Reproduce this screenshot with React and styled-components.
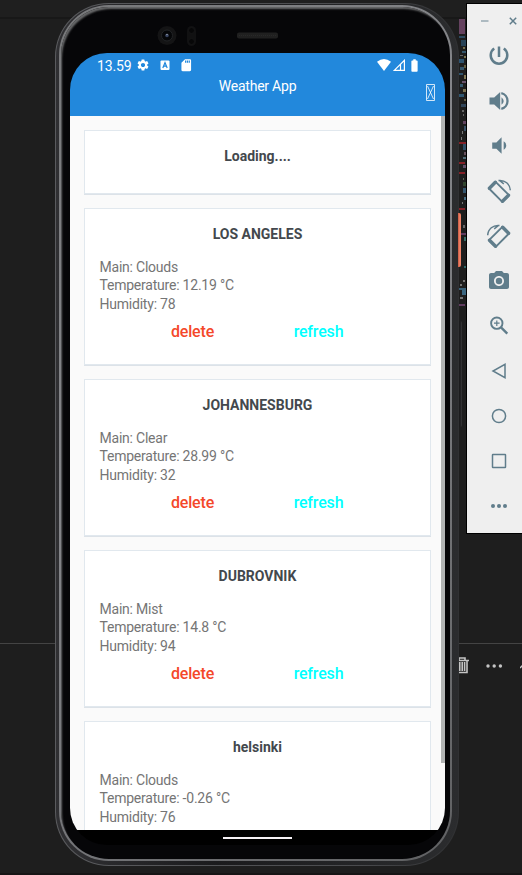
import React from "react";
import styled, { createGlobalStyle, css } from "styled-components";
import { MdVolumeDown, MdCameraAlt, MdSettings, MdSdCard, MdBatteryFull } from "react-icons/md";

const Global = createGlobalStyle`
  *, *::before, *::after { box-sizing: border-box; }
  body { margin: 0; background: #1f1f1f; font-family: Roboto, sans-serif; }
`;

const Desktop = styled.main`
  position: relative;
  width: 522px;
  height: 875px;
  overflow: hidden;
  background: #1e1e1e;
`;

/* Editor behind the emulator */
const Editor = styled.div`
  display: flex;
  flex-direction: column;
  height: 100%;
  border-bottom: 2px solid #171515;
`;
const EditorTabs = styled.div`
  height: 19px;
  background: #1f1f1f;
  border-bottom: 2px solid #181818;
`;
const EditorBody = styled.div`
  height: 624px;
  padding-left: 459px;
`;
const EditorPanel = styled.div`
  display: flex;
  align-items: flex-start;
  flex: 1;
  padding: 12px 0 0 454px;
  border-top: 1px solid #444;
  color: #c5c5c5;
`;
const PanelIcon = styled.svg`
  flex: none;
  margin-right: ${(p) => p.$after || 0}px;
`;

/* Phone */
const Phone = styled.section`
  position: absolute;
  left: 55px;
  top: 3px;
  width: 404px;
  height: 863px;
  padding: 1px;
  border-radius: 54px;
  background: linear-gradient(90deg, #5a5b5e, #4a4b4e 75%, #303133 98%);
`;
const Rim = styled.div`
  height: 100%;
  padding: 1px 6px 4px 3px;
  border-radius: 53px;
  background: linear-gradient(90deg, #303033, #1b1b1d 40%, #2b2c2e);
`;
const Chrome = styled.div`
  height: 100%;
  padding: 2px;
  border-radius: 50px;
  background: linear-gradient(135deg, #77787a, #85868a 40%, #606163);
`;
const Bezel = styled.div`
  display: flex;
  flex-direction: column;
  height: 100%;
  padding: 0 5px 0 9px;
  border-radius: 48px;
  background: #060608;
  box-shadow: inset 2px 3px 2px -1px #68696a;
`;
const Sensors = styled.div`
  height: 46px;
  flex: none;
`;
const SideKey = styled.div`
  position: absolute;
  left: 458px;
  top: ${(p) => p.$top}px;
  width: ${(p) => (p.$accent ? 3 : 4)}px;
  height: ${(p) => p.$height}px;
  border-radius: 0 2px 2px 0;
  background: ${(p) => (p.$accent ? "linear-gradient(90deg,#c65942,#f08367 60%)" : "linear-gradient(90deg,#151516,#202022 60%,#39393b)")};
`;
const Screen = styled.div`
  display: flex;
  flex-direction: column;
  flex: none;
  width: 375px;
  height: 792px;
  overflow: hidden;
  border-radius: 37px;
  background: #000;
`;
const AppBar = styled.header`
  display: flex;
  flex-direction: column;
  flex: none;
  height: 63px;
  background: #2288dc;
  color: #fff;
`;
const StatusBar = styled.div`
  display: flex;
  align-items: center;
  height: 24px;
  padding: 0 23px 0 27px;
`;
const Clock = styled.span`
  width: 39px;
  padding-top: 1px;
  font-size: 14px;
  line-height: 24px;
  letter-spacing: -0.15px;
`;
const StatusIcons = styled.div`
  display: flex;
  align-items: center;
  gap: ${(p) => p.$gap}px;
  ${(p) => p.$end && css`margin-left: auto;`}
`;
const TitleRow = styled.div`
  display: grid;
  grid-template-columns: 30px 1fr 30px;
  height: 39px;
`;
const AppTitle = styled.h1`
  grid-column: 2;
  margin: 0;
  font-size: 14px;
  font-weight: 400;
  line-height: 18px;
  letter-spacing: -0.22px;
  text-align: center;
`;
const MissingGlyph = styled.svg`
  margin: 7px 0 0 11px;
`;
const Viewport = styled.div`
  display: flex;
  flex: none;
  height: 714px;
  overflow: hidden;
  background: #fafafa;
`;
const CardList = styled.div`
  display: flex;
  flex-direction: column;
  gap: 14px;
  width: 371px;
  padding: 14px 10px 0 14px;
`;
const ScrollThumb = styled.div`
  width: 4px;
  height: 647px;
  background: #b2b4b4;
`;
const Card = styled.article`
  flex: none;
  height: ${(p) => (p.$short ? 64 : 157)}px;
  padding: 17px 14.5px 0;
  border: 1px solid #e1e8ee;
  background: #fff;
  box-shadow: 0 1px 0 #dce2e8;
`;
const CardTitle = styled.h2`
  margin: 0 0 15px;
  color: #43484d;
  font-size: 14px;
  font-weight: 700;
  line-height: 17px;
  text-align: center;
`;
const Detail = styled.p`
  margin: 0;
  color: #757575;
  font-size: 14px;
  line-height: 18.4px;
  letter-spacing: -0.22px;
`;
const Actions = styled.div`
  display: grid;
  grid-template-columns: 1fr 1fr;
  padding: 0 34px 0 30px;
  margin-top: 8px;
`;
const Action = styled.button`
  padding: 0;
  border: 0;
  background: none;
  color: ${(p) => p.$color};
  font: 500 16px/21px Roboto, sans-serif;
  letter-spacing: -0.17px;
`;
const NavBar = styled.footer`
  display: flex;
  justify-content: center;
  height: 15px;
  padding-top: 7px;
`;
const HomeHandle = styled.div`
  width: 69px;
  height: 2px;
  background: #f6f2f6;
`;

/* Emulator controls */
const Controls = styled.aside`
  position: absolute;
  left: 466px;
  top: 3px;
  display: flex;
  flex-direction: column;
  width: 66px;
  height: 531px;
  border: 1px solid #000;
  background: #efefef;
  color: #607d8b;
`;
const WindowButtons = styled.div`
  display: flex;
  align-items: center;
  justify-content: space-between;
  height: 29px;
  padding: 5px 14px 0 14px;
`;
const Control = styled.button`
  display: grid;
  place-items: center;
  width: 64px;
  height: 45px;
  padding: 0;
  border: 0;
  background: none;
  color: inherit;
`;

const Rotate = ({ flip }) => (
  <svg width="26" height="26" viewBox="0 0 26 26" fill="none" stroke="currentColor">
    <g transform={flip ? "translate(26 0) scale(-1 1)" : undefined}>
      <path d="M9.6 3.8 23 17.2 16.3 23.8 3 10.5z" strokeWidth="1.9" strokeLinejoin="round" />
      <path d="M3.4 10.2 9.3 4.3M16.5 23.2 22.5 17.2" strokeWidth="3.4" strokeLinecap="round" />
      <path d="M12.5 2.5C19 1.8 24 6 24.3 12.3M13.5 2.5l4.3 3.3" strokeWidth="1.5" />
    </g>
  </svg>
);
const Outline = ({ children }) => (
  <svg width="20" height="20" viewBox="0 0 20 20" fill="none" stroke="currentColor" strokeWidth="1.5">{children}</svg>
);
const Power = () => (
  <svg width="24" height="24" viewBox="0 0 24 24" fill="none" stroke="currentColor" strokeWidth="2.5"><path d="M12 2.5v10.5M7.2 4.6a8.3 8.3 0 1 0 9.6 0" /></svg>
);
const VolumeUp = () => (
  <svg width="24" height="24" viewBox="0 0 24 24" fill="none" stroke="currentColor"><path d="M2.5 8.5v7h4.7l6 5.5V3l-6 5.5z" fill="currentColor" stroke="none" /><path d="M14.5 8.2q4.4 3.8 0 7.6z" fill="currentColor" stroke="none" /><path d="M14.3 4.2a8 8 0 0 1 0 15.6" strokeWidth="2.3" /></svg>
);
const ZoomIn = () => (
  <svg width="24" height="24" viewBox="0 0 24 24" fill="none" stroke="currentColor"><circle cx="9.8" cy="9.2" r="5.7" strokeWidth="1.9" /><path d="m14 13.4 6.3 6.2" strokeWidth="2.4" /><path d="M7 9.2h5.6M9.8 6.4V12" strokeWidth="1.2" /></svg>
);

const controls = [
  ["Power", <Power />],
  ["Volume up", <VolumeUp />],
  ["Volume down", <MdVolumeDown size={25} />],
  ["Rotate left", <Rotate />],
  ["Rotate right", <Rotate flip />],
  ["Screenshot", <MdCameraAlt size={24} />],
  ["Zoom", <ZoomIn />],
  ["Back", <Outline><path d="M16 3.3v13.4L4 10z" /></Outline>],
  ["Home", <Outline><circle cx="10" cy="10" r="6.6" /></Outline>],
  ["Overview", <Outline><rect x="3.5" y="3.5" width="13" height="13" rx=".5" /></Outline>],
  ["More", <Outline><g fill="currentColor" stroke="none"><circle cx="4" cy="10" r="2" /><circle cx="10" cy="10" r="2" /><circle cx="16" cy="10" r="2" /></g></Outline>],
];

const cities = [
  { name: "LOS ANGELES", main: "Clouds", temp: "12.19", humidity: 78, actions: true },
  { name: "JOHANNESBURG", main: "Clear", temp: "28.99", humidity: 32, actions: true },
  { name: "DUBROVNIK", main: "Mist", temp: "14.8", humidity: 94, actions: true },
  { name: "helsinki", main: "Clouds", temp: "-0.26", humidity: 76, actions: false },
];

const codeMarks = [
  [0, 36, 6, 2, "#2c4a60"], [2, 40, 5, 6, "#284357"], [4, 47, 2, 2, "#77704e"], [3, 51, 4, 2, "#34566b"],
  [1, 55, 3, 1, "#666"], [5, 56, 2, 2, "#7b7650"], [0, 59, 5, 4, "#2e536f"], [5, 65, 2, 3, "#615d40"],
  [1, 67, 4, 3, "#34556c"], [5, 75, 2, 4, "#817855"], [0, 73, 4, 2, "#31556d"], [3, 81, 4, 2, "#69536c"],
  [1, 84, 3, 3, "#365a70"], [4, 89, 3, 3, "#7b7352"], [0, 94, 5, 3, "#305670"], [5, 99, 2, 2, "#666045"],
  [2, 104, 5, 3, "#32465a"], [3, 110, 2, 2, "#666"], [4, 114, 1, 2, "#666"], [4, 121, 3, 3, "#61445f"],
  [5, 126, 2, 5, "#385167"], [3, 131, 1, 3, "#777"], [2, 137, 1, 3, "#777"], [0, 142, 7, 2, "#842127"],
  [4, 144, 3, 6, "#2f4e67"], [5, 152, 2, 3, "#68515d"], [4, 157, 3, 2, "#506c77"], [0, 162, 6, 2, "#842127"],
  [4, 165, 3, 3, "#63506a"], [0, 172, 6, 2, "#842127"], [4, 178, 1, 2, "#665"], [4, 182, 3, 4, "#31462e"],
  [4, 188, 3, 5, "#34566f"], [5, 197, 2, 3, "#446b82"], [3, 202, 1, 2, "#777"], [0, 208, 6, 2, "#842127"],
  [4, 225, 2, 3, "#666"], [2, 233, 5, 2, "#603c60"], [5, 237, 2, 4, "#386e65"], [5, 266, 2, 2, "#2d6666"],
  [4, 280, 2, 2, "#777"], [1, 284, 2, 2, "#777"], [0, 288, 7, 2, "#386078"], [3, 290, 4, 5, "#3b6680"],
  [1, 297, 3, 2, "#777"], [0, 304, 6, 2, "#603c60"],
];

const Minimap = () => (
  <svg width="8" height="300" viewBox="0 19 8 300">
    <path d="M0 19h6v15H0z" fill="#65425f" />
    {codeMarks.map(([x, y, w, h, c], i) => <rect key={i} x={x} y={y} width={w} height={h} fill={c} />)}
  </svg>
);

export default function App() {
  return (
    <>
      <Global />
      <Desktop>
        <Editor>
          <EditorTabs />
          <EditorBody><Minimap /></EditorBody>
          <EditorPanel>
            <PanelIcon $after={15} width="16" height="20" viewBox="0 0 16 20" fill="none" stroke="currentColor" strokeWidth="1.6"><path d="M1 4.5h14M5 4V2h6v2M3 4v12.5h10V4M5.8 6v9M8.2 6v9M10.6 6v9" /></PanelIcon>
            <PanelIcon $after={17} width="18" height="20" viewBox="0 0 18 20" fill="currentColor"><circle cx="3" cy="10" r="1.7" /><circle cx="9.2" cy="10" r="1.7" /><circle cx="15.4" cy="10" r="1.7" /></PanelIcon>
            <PanelIcon width="8" height="20" viewBox="0 0 8 20" fill="none" stroke="currentColor" strokeWidth="1.4"><path d="m0 12 5-5" /></PanelIcon>
          </EditorPanel>
        </Editor>

        <SideKey $top={321} $height={106} />
        <Phone>
          <Rim>
            <Chrome>
              <Bezel>
                <Sensors>
                  <svg width="375" height="46" viewBox="0 0 375 46">
                    <circle cx="97" cy="28.5" r="9.5" fill="#141415" />
                    <circle cx="97" cy="28.5" r="5.5" fill="#050608" stroke="#222426" />
                    <circle cx="97" cy="28.5" r="1.8" fill="#36435f" />
                    <circle cx="97" cy="27.5" r=".7" fill="#a5acb9" />
                    <rect x="117" y="19" width="9" height="20" rx="4.5" fill="#111112" />
                    <circle cx="121.5" cy="23.5" r="3" fill="#070708" stroke="#151516" />
                    <circle cx="121.5" cy="34.5" r="3" fill="#070708" stroke="#151516" />
                    <rect x="167" y="25.5" width="41" height="6" rx="2" fill="#202020" />
                    <path d="M169 28.5h37" stroke="#292929" strokeDasharray="1 1" />
                  </svg>
                </Sensors>
                <Screen>
                  <AppBar>
                    <StatusBar>
                      <Clock>13.59</Clock>
                      <StatusIcons $gap={7.5}>
                        <MdSettings size={14} />
                        <svg width="14" height="14" viewBox="0 0 14 14"><rect x="2.5" y="2.5" width="9" height="9.5" rx="1" fill="#fff" /><path d="m4.8 9.9 2.2-5.4 2.2 5.4M5.7 8.2h2.6" fill="none" stroke="#2288dc" strokeWidth="1.2" /></svg>
                        <MdSdCard size={14.5} />
                      </StatusIcons>
                      <StatusIcons $gap={2} $end>
                        <svg width="14" height="12" viewBox="0 0 14 12"><path d="M0 2.8Q7-2.8 14 2.8L7 12z" fill="#fff" /></svg>
                        <svg width="12" height="12" viewBox="0 0 12 12"><path d="M1.3 11.4 11.4 1.3v10.1zM7.5 5.2v6" fill="none" stroke="#fff" strokeWidth="1.2" /></svg>
                        <MdBatteryFull size={15} />
                      </StatusIcons>
                    </StatusBar>
                    <TitleRow>
                      <AppTitle>Weather App</AppTitle>
                      <MissingGlyph width="9" height="17" viewBox="0 0 9 17" fill="none" stroke="#fff" strokeWidth=".8"><path d="M.5.5h8v16h-8zM1.5 2l6 13M7.5 2l-6 13" /></MissingGlyph>
                    </TitleRow>
                  </AppBar>
                  <Viewport>
                    <CardList>
                      <Card $short><CardTitle>Loading....</CardTitle></Card>
                      {cities.map(({ name, main, temp, humidity, actions }) => (
                        <Card key={name}>
                          <CardTitle>{name}</CardTitle>
                          <Detail>Main: {main}</Detail>
                          <Detail>Temperature: {temp} °C</Detail>
                          <Detail>Humidity: {humidity}</Detail>
                          {actions && (
                            <Actions>
                              <Action $color="#f4482a">delete</Action>
                              <Action $color="#00ffff">refresh</Action>
                            </Actions>
                          )}
                        </Card>
                      ))}
                    </CardList>
                    <ScrollThumb />
                  </Viewport>
                  <NavBar><HomeHandle /></NavBar>
                </Screen>
              </Bezel>
            </Chrome>
          </Rim>
        </Phone>
        <SideKey $accent $top={213} $height={54} />

        <Controls>
          <WindowButtons>
            <svg width="8" height="8" viewBox="0 0 8 8"><path d="M0 4h7.5" stroke="#a5b4bc" strokeWidth="1.8" /></svg>
            <svg width="8" height="8" viewBox="0 0 8 8"><path d="m.8.8 6.4 6.4M7.2.8.8 7.2" stroke="currentColor" strokeWidth="1.5" /></svg>
          </WindowButtons>
          {controls.map(([label, icon]) => <Control key={label} aria-label={label}>{icon}</Control>)}
        </Controls>
      </Desktop>
    </>
  );
}
